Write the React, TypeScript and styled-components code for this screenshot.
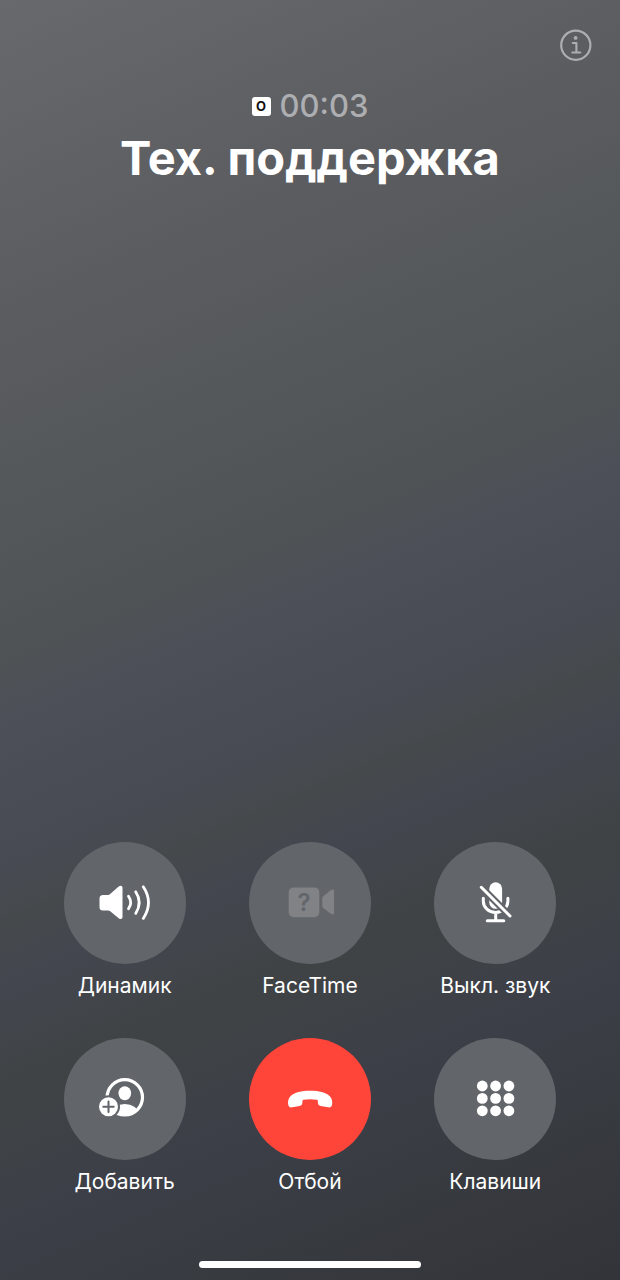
import React from "react";
import styled, { createGlobalStyle } from "styled-components";

const GlobalStyle = createGlobalStyle`
  * { box-sizing: border-box; }
  body { margin: 0; background: #33363a; }
`;

const Screen = styled.main`
  min-height: 100vh;
  display: flex;
  flex-direction: column;
  color: #fff;
  font-family: Inter, "Liberation Sans", sans-serif;
  background: linear-gradient(
    157deg,
    #68696d 0%,
    #5b5c60 21%,
    #54585b 32%,
    #4f5355 42%,
    #4c4f58 48%,
    #484b54 55%,
    #46494c 60%,
    #43464e 64%,
    #404345 71%,
    #3c3f47 80%,
    #373a3f 89%,
    #323439 100%
  );
`;

const TopBar = styled.nav`
  display: flex;
  justify-content: flex-end;
  padding: 29px 28px 0;
`;

const InfoButton = styled.button`
  width: 32px;
  height: 32px;
  padding: 0;
  border: 0;
  background: none;
  color: #adaeb1;

  svg { display: block; }
`;

const Header = styled.header`
  display: flex;
  flex-direction: column;
  align-items: center;
  gap: 6px;
  padding-top: 27px;
`;

const Status = styled.div`
  display: flex;
  align-items: center;
  gap: 9px;
`;

const SimBadge = styled.span`
  width: 19px;
  height: 19px;
  border-radius: 3px;
  background: #fff;
  color: #111;
  font-size: 13px;
  font-weight: 700;
  line-height: 19px;
  text-align: center;
`;

const Timer = styled.time`
  color: #adaeb1;
  font-size: 31px;
  font-weight: 500;
  line-height: 36px;
`;

const Caller = styled.h1`
  margin: 0;
  font-size: 47px;
  font-weight: 700;
  line-height: 56px;
`;

const Controls = styled.section`
  display: grid;
  grid-template-columns: repeat(3, 1fr);
  row-gap: 38px;
  margin-top: auto;
  padding: 0 32px;
`;

const Control = styled.div`
  display: flex;
  flex-direction: column;
  align-items: center;
  gap: 8px;
`;

const RoundButton = styled.button<{ $danger?: boolean }>`
  width: 122px;
  height: 122px;
  display: flex;
  align-items: center;
  justify-content: center;
  padding: 0;
  border: 0;
  border-radius: 50%;
  color: #fff;
  background: ${({ $danger }) => ($danger ? "#ff453a" : "#626569")};
`;

const Label = styled.label`
  font-size: 21px;
  line-height: 28px;
  white-space: nowrap;
`;

const HomeIndicator = styled.div`
  width: 222px;
  height: 7px;
  margin: 65px auto 12px;
  border-radius: 4px;
  background: #fff;
`;

const Glyph = ({ children }: { children: React.ReactNode }) => (
  <svg width="60" height="60" viewBox="0 0 60 60" fill="none" aria-hidden="true">
    {children}
  </svg>
);

const SpeakerIcon = () => (
  <Glyph>
    <path
      fill="currentColor"
      d="M8 22H13Q14.1 22 14.9 21.3L23.7 13.6Q24.8 12.7 25.8 12.7Q27.5 12.8 27.5 14.8V44Q27.5 46 25.8 46.1Q24.8 46.1 23.7 45.2L14.9 38.1Q14.1 37.4 13 37.4H8Q4.5 37.4 4.5 33.9V25.5Q4.5 22 8 22Z"
    />
    <g stroke="currentColor" strokeWidth="2.8" strokeLinecap="round">
      <path d="M33.5 23.2Q37.8 29.5 33.5 35.8" />
      <path d="M40.7 18.8Q47.7 29.5 40.7 40.4" />
      <path d="M48.3 13.8Q58.7 29.5 48.3 45.4" />
    </g>
  </Glyph>
);

const FaceTimeIcon = () => (
  <Glyph>
    <g fill="#808286">
      <rect x="8.7" y="14.4" width="30.6" height="29.8" rx="5" />
      <path d="M43.2 23.2L50.8 17.3Q51.8 16.6 53 16.6Q54 16.8 54 18V40Q54 41.2 53 41.4Q51.8 41.4 50.8 40.7L43.2 35Q42.3 34.2 42.3 33V25.2Q42.3 24 43.2 23.2Z" />
    </g>
    <text
      x="24"
      y="38"
      textAnchor="middle"
      fill="#626569"
      fontFamily="Inter, sans-serif"
      fontSize="24"
      fontWeight="600"
    >
      ?
    </text>
  </Glyph>
);

const MutedIcon = () => (
  <Glyph>
    <mask id="mic-cut">
      <rect width="60" height="60" fill="#fff" />
      <path d="M12 10L49.3 47.3" stroke="#000" strokeWidth="7" />
    </mask>
    <g mask="url(#mic-cut)">
      <rect x="24.3" y="9.3" width="12.8" height="26.5" rx="6.4" fill="currentColor" />
      <path
        d="M18.3 25.3V28A12.3 11.6 0 0 0 42.9 28V25.3M30.7 39.5V47"
        stroke="currentColor"
        strokeWidth="3"
        strokeLinecap="round"
      />
    </g>
    <path
      d="M16.3 14.3L45 43M22.3 47.8H38.8"
      stroke="currentColor"
      strokeWidth="3"
      strokeLinecap="round"
    />
  </Glyph>
);

const AddIcon = () => (
  <Glyph>
    <mask id="person-cut">
      <rect width="60" height="60" fill="#fff" />
      <circle cx="13.5" cy="37.7" r="11.5" fill="#000" />
    </mask>
    <clipPath id="person-clip">
      <circle cx="29.8" cy="28.3" r="18.5" />
    </clipPath>
    <mask id="plus-cut">
      <rect width="60" height="60" fill="#fff" />
      <path d="M8.3 37.7H18.7M13.5 32.5V42.9" stroke="#000" strokeWidth="2" strokeLinecap="round" />
    </mask>
    <g mask="url(#person-cut)">
      <circle cx="29.8" cy="28.3" r="17.7" stroke="currentColor" strokeWidth="3.2" />
      <ellipse cx="29.8" cy="24.3" rx="6.3" ry="7" fill="currentColor" />
      <ellipse cx="29.8" cy="44" rx="13.5" ry="9" fill="currentColor" clipPath="url(#person-clip)" />
    </g>
    <circle cx="13.5" cy="37.7" r="9.5" fill="currentColor" mask="url(#plus-cut)" />
  </Glyph>
);

const HangUpIcon = () => (
  <Glyph>
    <path
      fill="currentColor"
      d="M30.2 21.7C39 21.7 46 23.4 49.6 27C51.8 29.3 52.5 32 52.2 35C51.9 37.6 50.6 38.7 48.2 38.3L40.6 37Q38 36.5 37.9 34L37.8 31.7Q37.7 30.9 36.8 30.7Q30.2 29.8 23.5 30.7Q22.6 30.9 22.5 31.7L22.4 34Q22.3 36.5 19.7 37L12.1 38.3C9.7 38.7 8.4 37.6 8.1 35C7.8 32 8.5 29.3 10.7 27C14.3 23.4 21.3 21.7 30.2 21.7Z"
    />
  </Glyph>
);

const KeypadIcon = () => (
  <Glyph>
    {[17, 29.4, 41.8].map((cy) =>
      [17.3, 30.6, 43.9].map((cx) => (
        <circle key={`${cx}-${cy}`} cx={cx} cy={cy} r="5.4" fill="currentColor" />
      ))
    )}
  </Glyph>
);

const controls = [
  { id: "speaker", label: "Динамик", icon: <SpeakerIcon /> },
  { id: "facetime", label: "FaceTime", icon: <FaceTimeIcon />, disabled: true },
  { id: "mute", label: "Выкл. звук", icon: <MutedIcon /> },
  { id: "add", label: "Добавить", icon: <AddIcon /> },
  { id: "end", label: "Отбой", icon: <HangUpIcon />, danger: true },
  { id: "keypad", label: "Клавиши", icon: <KeypadIcon /> },
];

export default function App() {
  return (
    <>
      <GlobalStyle />
      <Screen>
        <TopBar>
          <InfoButton type="button" aria-label="Информация">
            <svg width="32" height="32" viewBox="0 0 32 32" fill="none" stroke="currentColor">
              <circle cx="15.8" cy="16.2" r="14.6" strokeWidth="2.2" />
              <circle cx="15.6" cy="8.9" r="1.9" fill="currentColor" stroke="none" />
              <path d="M12.8 14H16.4V23.5M12.3 23.5H20.3" strokeWidth="2.1" strokeLinecap="round" strokeLinejoin="round" />
            </svg>
          </InfoButton>
        </TopBar>
        <Header>
          <Status>
            <SimBadge>О</SimBadge>
            <Timer>00:03</Timer>
          </Status>
          <Caller>Тех. поддержка</Caller>
        </Header>
        <Controls>
          {controls.map(({ id, label, icon, danger, disabled }) => (
            <Control key={id}>
              <RoundButton id={id} type="button" $danger={danger} disabled={disabled}>
                {icon}
              </RoundButton>
              <Label htmlFor={id}>{label}</Label>
            </Control>
          ))}
        </Controls>
        <HomeIndicator />
      </Screen>
    </>
  );
}
